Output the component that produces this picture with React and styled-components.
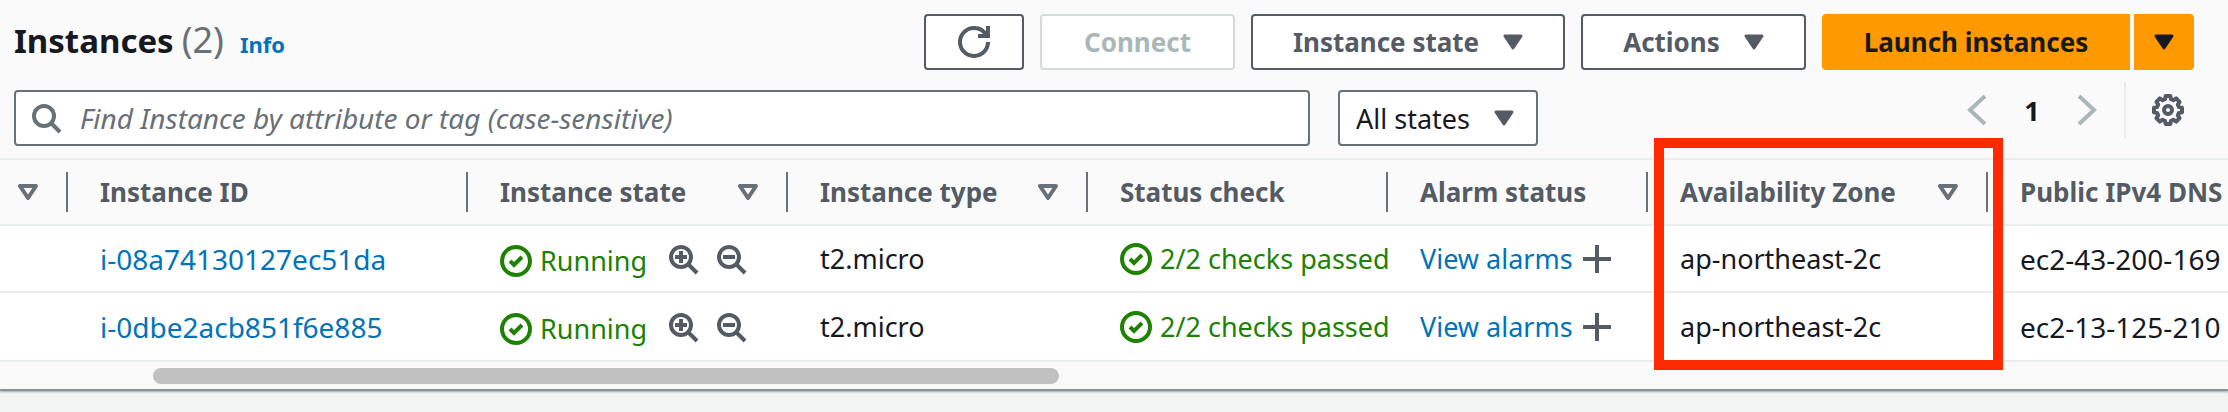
import React from 'react';
import styled, { createGlobalStyle, css } from 'styled-components';

const color = {
  text: '#16191f',
  strong: '#545b64',
  muted: '#687078',
  disabled: '#aab7b8',
  disabledLine: '#d5dbdb',
  link: '#0073bb',
  success: '#1d8102',
  line: '#eaeded',
  surface: '#fafafa',
  primary: '#ff9900',
  highlight: '#ff2a00',
};

const GlobalStyle = createGlobalStyle`
  *, *::before, *::after { box-sizing: border-box; }
  body {
    margin: 0;
    min-height: 100vh;
    background: #f2f3f3;
    color: ${color.text};
    font-family: 'Noto Sans', 'Open Sans', sans-serif;
    font-size: 27px;
    overflow-x: hidden;
  }
  button, input, select { font: inherit; color: inherit; }
`;

const Panel = styled.main`
  background: ${color.surface};
  border-bottom: 2px solid #879596;
  box-shadow: 0 1px 2px rgba(0, 28, 36, 0.35);
`;

const TitleBar = styled.header`
  display: flex;
  justify-content: space-between;
  align-items: flex-start;
  padding: 14px 34px 0 14px;
`;

const Title = styled.h1`
  display: flex;
  align-items: baseline;
  margin: 0;
  font-size: 33px;
  line-height: 52px;
  white-space: nowrap;
`;

const Counter = styled.span`
  margin-left: 8px;
  font-size: 36px;
  font-weight: 400;
  color: ${color.muted};
`;

const InfoLink = styled.a`
  margin-left: 16px;
  font-size: 22px;
  color: ${color.link};
  text-decoration: none;
`;

const Actions = styled.div`
  display: flex;
  gap: 16px;
`;

const Button = styled.button`
  display: flex;
  align-items: center;
  justify-content: center;
  gap: 24px;
  height: 56px;
  min-width: ${(p) => p.$width}px;
  padding: 0;
  border: 2px solid ${color.strong};
  border-radius: 4px;
  background: #fff;
  color: ${color.strong};
  font-size: 26px;
  font-weight: 700;
  white-space: nowrap;

  &:disabled {
    border-color: ${color.disabledLine};
    color: ${color.disabled};
  }

  ${(p) =>
    p.$primary &&
    css`
      border-color: ${color.primary};
      background: ${color.primary};
      color: ${color.text};
    `}
`;

const SplitButton = styled.div`
  display: flex;
  gap: 4px;

  ${Button}:first-child { border-radius: 4px 0 0 4px; }
  ${Button}:last-child { border-radius: 0 4px 4px 0; }
`;

const FilterBar = styled.div`
  display: flex;
  align-items: flex-start;
  padding: 12px 44px 12px 14px;
`;

const Filters = styled.div`
  display: flex;
  flex: 1;
  gap: 28px;
  padding-top: 8px;
`;

const SearchBox = styled.label`
  display: flex;
  align-items: center;
  flex: 0 1 1296px;
  gap: 18px;
  height: 56px;
  padding: 0 14px;
  border: 2px solid ${color.muted};
  border-radius: 4px;
  background: #fff;
  color: ${color.muted};
`;

const SearchInput = styled.input`
  flex: 1;
  min-width: 0;
  padding: 0;
  border: 0;
  outline: 0;
  background: none;
  font-size: 28px;

  &::placeholder {
    color: ${color.muted};
    font-style: italic;
    opacity: 1;
  }
`;

const SelectBox = styled.div`
  display: grid;
  align-items: center;
  width: 200px;
  height: 56px;
  color: ${color.strong};

  > * { grid-area: 1 / 1; }
  > svg {
    justify-self: end;
    margin-right: 24px;
    pointer-events: none;
  }
`;

const Select = styled.select`
  width: 100%;
  height: 100%;
  padding: 0 16px;
  border: 2px solid ${color.muted};
  border-radius: 4px;
  background: #fff;
  color: ${color.text};
  appearance: none;
`;

const Pager = styled.nav`
  display: flex;
  align-items: center;
  height: 56px;
`;

const IconButton = styled.button`
  display: flex;
  padding: 0;
  border: 0;
  background: none;
  color: ${color.strong};

  &:disabled { color: ${color.disabled}; }
`;

const PageNumber = styled.button`
  width: 80px;
  padding: 0;
  border: 0;
  background: none;
  font-weight: 700;
`;

const Preferences = styled.div`
  display: flex;
  align-items: center;
  height: 100%;
  margin-left: 20px;
  padding-left: 26px;
  border-left: 2px solid ${color.line};
`;

const TableRegion = styled.section`
  position: relative;
  border-top: 2px solid ${color.line};
`;

const TableClip = styled.div`
  overflow: hidden;
`;

const Table = styled.table`
  width: 100%;
  min-width: 2400px;
  table-layout: fixed;
  border-collapse: separate;
  border-spacing: 0;
`;

const HeadCell = styled.th`
  width: ${(p) => (p.$width ? `${p.$width}px` : 'auto')};
  height: 66px;
  padding: 0;
  border-bottom: 2px solid ${color.line};
  color: ${color.strong};
  font-size: 26px;
  text-align: left;
  white-space: nowrap;
`;

const HeadContent = styled.div`
  display: flex;
  align-items: center;
  justify-content: space-between;
  height: 40px;
  padding: 0 28px 0 ${(p) => (p.$narrow ? 18 : 32)}px;
  border-right: 2px solid ${color.muted};
`;

const SortButton = styled(IconButton)`
  color: ${color.muted};
`;

const Cell = styled.td`
  height: 67px;
  padding: 0 0 0 32px;
  border-bottom: 2px solid ${color.line};
  font-size: ${(p) => (p.$wide ? 28 : 27)}px;
  white-space: nowrap;
  overflow: hidden;
`;

const Row = styled.tr`
  background: #fff;

  &:last-child ${Cell} { height: 69px; }
`;

const Link = styled.a`
  color: ${color.link};
  text-decoration: none;
`;

const Inline = styled.div`
  display: flex;
  align-items: center;
  gap: ${(p) => p.$gap}px;
`;

const Status = styled.span`
  display: flex;
  align-items: center;
  gap: 8px;
  padding-top: ${(p) => (p.$lowered ? 4 : 0)}px;
  color: ${color.success};
`;

const Track = styled.div`
  display: grid;
  grid-template-columns: 153fr 906fr 1169fr;
  padding: 6px 0 5px;
`;

const Thumb = styled.div`
  grid-column: 2;
  height: 16px;
  border-radius: 8px;
  background: #c1c1c1;
`;

const Highlight = styled.div`
  position: absolute;
  top: -22px;
  left: 1654px;
  width: 349px;
  height: 232px;
  border: 10px solid ${color.highlight};
  pointer-events: none;
`;

const Svg = styled.svg`
  flex: none;
  display: block;
  fill: none;
  stroke: currentColor;
  stroke-width: 2;
`;

const Icon = ({ children }) => (
  <Svg width="32" height="32" viewBox="0 0 16 16" aria-hidden="true">
    {children}
  </Svg>
);

const RefreshIcon = () => (
  <Icon>
    <path d="M10 5h5V0" />
    <path d="M15 8a6.957 6.957 0 0 1-7 7 6.957 6.957 0 0 1-7-7 6.957 6.957 0 0 1 7-7 6.87 6.87 0 0 1 6.3 4" />
  </Icon>
);

const SearchIcon = ({ children }) => (
  <Icon>
    <circle cx="7" cy="7" r="5" />
    <path d="m15 15-4.5-4.5" />
    {children}
  </Icon>
);

const CheckIcon = () => (
  <Icon>
    <circle cx="8" cy="8" r="7" />
    <path d="m5 8 2 2 4-4" />
  </Icon>
);

const PlusIcon = () => (
  <Icon>
    <path d="M8 1v14M1 8h14" />
  </Icon>
);

const GearIcon = () => (
  <Icon>
    <path
      strokeLinejoin="round"
      d="M15 9.200V6.800l-1.600-.3-.5-1.200.9-1.400-1.700-1.700-1.400.9-1.200-.5L9.200 1H6.800l-.3 1.600-1.200.5-1.400-.9-1.700 1.700.9 1.400-.5 1.200L1 6.800v2.400l1.600.3.5 1.200-.9 1.400 1.700 1.700 1.400-.9 1.200.5.3 1.600h2.400l.3-1.600 1.200-.5 1.400.9 1.700-1.700-.9-1.400.5-1.200z"
    />
    <circle cx="8" cy="8" r="2" />
  </Icon>
);

const Caret = () => (
  <Svg width="20" height="16" viewBox="0 0 20 16" aria-hidden="true">
    <path d="M2 2h16l-8 12z" fill="currentColor" strokeWidth="3" strokeLinejoin="round" />
  </Svg>
);

const SortIcon = () => (
  <Svg width="20" height="16" viewBox="0 0 20 16" aria-hidden="true">
    <path d="M2 2h16l-8 12z" strokeWidth="4" strokeLinejoin="round" />
  </Svg>
);

const columns = [
  { key: 'name', label: '', width: 68, sortable: true },
  { key: 'id', label: 'Instance ID', width: 400 },
  { key: 'state', label: 'Instance state', width: 320, sortable: true },
  { key: 'type', label: 'Instance type', width: 300, sortable: true },
  { key: 'check', label: 'Status check', width: 300 },
  { key: 'alarm', label: 'Alarm status', width: 260 },
  { key: 'zone', label: 'Availability Zone', width: 340, sortable: true },
  { key: 'dns', label: 'Public IPv4 DNS' },
];

const instances = [
  { id: 'i-08a74130127ec51da', dns: 'ec2-43-200-169' },
  { id: 'i-0dbe2acb851f6e885', dns: 'ec2-13-125-210' },
];

const InstanceRow = ({ id, dns }) => (
  <Row>
    <Cell />
    <Cell $wide>
      <Link href={`#${id}`}>{id}</Link>
    </Cell>
    <Cell>
      <Inline $gap={20}>
        <Status $lowered>
          <CheckIcon />
          Running
        </Status>
        <Inline $gap={16}>
          <IconButton aria-label="Include state in filter">
            <SearchIcon>
              <path d="M7 4v6M4 7h6" />
            </SearchIcon>
          </IconButton>
          <IconButton aria-label="Exclude state from filter">
            <SearchIcon>
              <path d="M4 7h6" />
            </SearchIcon>
          </IconButton>
        </Inline>
      </Inline>
    </Cell>
    <Cell>t2.micro</Cell>
    <Cell>
      <Status>
        <CheckIcon />
        2/2 checks passed
      </Status>
    </Cell>
    <Cell>
      <Inline $gap={8}>
        <Link href="#alarms">View alarms</Link>
        <IconButton aria-label="Add alarm">
          <PlusIcon />
        </IconButton>
      </Inline>
    </Cell>
    <Cell>ap-northeast-2c</Cell>
    <Cell $wide>{dns}</Cell>
  </Row>
);

export default function App() {
  return (
    <>
      <GlobalStyle />
      <Panel>
        <TitleBar>
          <Title>
            Instances
            <Counter>(2)</Counter>
            <InfoLink href="#info">Info</InfoLink>
          </Title>
          <Actions>
            <Button $width={100} aria-label="Refresh">
              <RefreshIcon />
            </Button>
            <Button $width={195} disabled>
              Connect
            </Button>
            <Button $width={314}>
              Instance state
              <Caret />
            </Button>
            <Button $width={225}>
              Actions
              <Caret />
            </Button>
            <SplitButton>
              <Button $width={308} $primary>
                Launch instances
              </Button>
              <Button $width={60} $primary aria-label="More launch options">
                <Caret />
              </Button>
            </SplitButton>
          </Actions>
        </TitleBar>

        <FilterBar>
          <Filters>
            <SearchBox>
              <SearchIcon />
              <SearchInput
                type="text"
                aria-label="Find Instance"
                placeholder="Find Instance by attribute or tag (case-sensitive)"
              />
            </SearchBox>
            <SelectBox>
              <Select aria-label="Instance state filter">
                <option>All states</option>
              </Select>
              <Caret />
            </SelectBox>
          </Filters>
          <Pager aria-label="Pages">
            <IconButton disabled aria-label="Previous page">
              <Icon>
                <path d="M12.500 1 5 8l7.500 7" />
              </Icon>
            </IconButton>
            <PageNumber>1</PageNumber>
            <IconButton disabled aria-label="Next page">
              <Icon>
                <path d="M3.500 1 11 8l-7.500 7" />
              </Icon>
            </IconButton>
            <Preferences>
              <IconButton aria-label="Preferences">
                <GearIcon />
              </IconButton>
            </Preferences>
          </Pager>
        </FilterBar>

        <TableRegion>
          <TableClip>
            <Table>
              <thead>
                <tr>
                  {columns.map(({ key, label, width, sortable }) => (
                    <HeadCell key={key} $width={width} scope="col">
                      <HeadContent $narrow={!label}>
                        {label}
                        {sortable && (
                          <SortButton aria-label={`Sort by ${label || 'Name'}`}>
                            <SortIcon />
                          </SortButton>
                        )}
                      </HeadContent>
                    </HeadCell>
                  ))}
                </tr>
              </thead>
              <tbody>
                {instances.map((instance) => (
                  <InstanceRow key={instance.id} {...instance} />
                ))}
              </tbody>
            </Table>
          </TableClip>
          <Track>
            <Thumb />
          </Track>
          <Highlight />
        </TableRegion>
      </Panel>
    </>
  );
}
